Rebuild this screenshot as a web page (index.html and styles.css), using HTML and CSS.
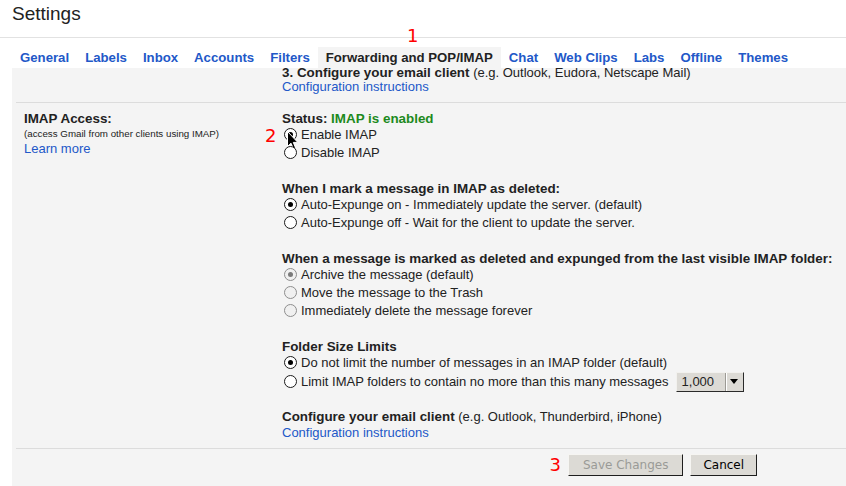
FILE: index.html
```html
<!DOCTYPE html>
<html lang="en">
<head>
<meta charset="utf-8">
<title>Settings</title>
<link rel="stylesheet" href="styles.css">
</head>
<body>
<header class="header"><h1 class="title">Settings</h1></header>
<nav class="tabs">
  <a class="tab">General</a>
  <a class="tab">Labels</a>
  <a class="tab">Inbox</a>
  <a class="tab">Accounts</a>
  <a class="tab">Filters</a>
  <span class="tab tab--active">Forwarding and POP/IMAP</span>
  <a class="tab">Chat</a>
  <a class="tab">Web Clips</a>
  <a class="tab">Labs</a>
  <a class="tab">Offline</a>
  <a class="tab">Themes</a>
</nav>
<main class="panel">
  <section class="row row--clipped">
    <div class="row__label"></div>
    <div class="row__body">
      <div class="line"><b class="strong">3. Configure your email client</b> (e.g. Outlook, Eudora, Netscape Mail)</div>
      <a class="link line">Configuration instructions</a>
    </div>
  </section>
  <section class="row">
    <div class="row__label">
      <div class="label-title">IMAP Access:</div>
      <div class="label-note">(access Gmail from other clients using IMAP)</div>
      <a class="link label-link">Learn more</a>
    </div>
    <div class="row__body">
      <div class="group">
        <div class="heading">Status: <span class="status-on">IMAP is enabled</span></div>
        <div class="opt">
          <span class="radio radio--on"></span>Enable IMAP
          <span class="marker marker--2">2</span>
          <svg class="cursor" width="12" height="19" viewBox="0 0 12 19"><path d="M0.5 0.5 L0.5 15.5 L4 12.2 L6.4 17.8 L8.6 16.9 L6.3 11.4 L10.8 11.4 Z" fill="#000" stroke="#fff" stroke-width="1" stroke-linejoin="round"/></svg>
        </div>
        <div class="opt"><span class="radio"></span>Disable IMAP</div>
      </div>
      <div class="group">
        <div class="heading">When I mark a message in IMAP as deleted:</div>
        <div class="opt"><span class="radio radio--on"></span>Auto-Expunge on - Immediately update the server. (default)</div>
        <div class="opt"><span class="radio"></span>Auto-Expunge off - Wait for the client to update the server.</div>
      </div>
      <div class="group">
        <div class="heading">When a message is marked as deleted and expunged from the last visible IMAP folder:</div>
        <div class="opt"><span class="radio radio--disabled radio--on"></span>Archive the message (default)</div>
        <div class="opt"><span class="radio radio--disabled"></span>Move the message to the Trash</div>
        <div class="opt"><span class="radio radio--disabled"></span>Immediately delete the message forever</div>
      </div>
      <div class="group">
        <div class="heading">Folder Size Limits</div>
        <div class="opt"><span class="radio radio--on"></span>Do not limit the number of messages in an IMAP folder (default)</div>
        <div class="opt opt--select"><span class="radio"></span>Limit IMAP folders to contain no more than this many messages
          <span class="select"><span class="select__value">1,000</span><span class="select__arrow"><span class="triangle"></span></span></span>
        </div>
      </div>
      <div class="config">
        <div class="line"><b class="strong">Configure your email client</b> (e.g. Outlook, Thunderbird, iPhone)</div>
        <a class="link line line--link">Configuration instructions</a>
      </div>
    </div>
  </section>
  <section class="actions">
    <span class="marker marker--3">3</span>
    <button class="btn btn--disabled" disabled>Save Changes</button>
    <button class="btn">Cancel</button>
  </section>
</main>
<span class="marker marker--1">1</span>
</body>
</html>
```
FILE: styles.css
```css
html, body {
  margin: 0;
  padding: 0;
}
body {
  position: relative;
  width: 846px;
  height: 486px;
  overflow: hidden;
  background: #fff;
  color: #222;
  font-family: "Liberation Sans", Arial, sans-serif;
  font-size: 13px;
}

.header {
  height: 34px;
  padding: 3px 12px 0;
  border-bottom: 1px solid #e2e2e2;
}
.title {
  margin: 0;
  font-size: 19px;
  line-height: 22px;
  font-weight: normal;
  color: #222;
}

.tabs {
  display: flex;
  margin: 9px 0 0 12px;
}
.tab {
  padding: 0 8px;
  line-height: 21px;
  font-size: 13.2px;
  font-weight: bold;
  color: #2258c8;
  white-space: nowrap;
}
.tab--active {
  background: #f4f4f4;
  color: #222;
}

.panel {
  margin-left: 12px;
  height: 418px;
  overflow: hidden;
  background: #f4f4f4;
}

.row {
  display: grid;
  grid-template-columns: 258px 1fr;
  margin-left: 4px;
  padding: 8.5px 0 7.5px 8px;
  border-top: 1px solid #dcdcdc;
}
.row--clipped {
  border-top: none;
  margin-top: -10.5px;
  padding-bottom: 8px;
}

.line {
  display: block;
  line-height: 14px;
  white-space: nowrap;
}
.line--link {
  line-height: 17px;
}
.strong {
  font-size: 13.4px;
  font-weight: bold;
}
.link {
  color: #2258c8;
  text-decoration: none;
}

.label-title {
  font-size: 13.4px;
  font-weight: bold;
  line-height: 14px;
}
.label-note {
  margin-top: 1px;
  font-size: 9.75px;
  line-height: 14px;
  color: #222;
}
.label-link {
  display: block;
  line-height: 15px;
}

.group + .group {
  margin-top: 20px;
}
.config {
  margin-top: 18px;
}
.heading {
  font-size: 13.4px;
  font-weight: bold;
  line-height: 14px;
  white-space: nowrap;
}
.status-on {
  color: #1d8a1d;
}

.opt {
  position: relative;
  display: flex;
  align-items: center;
  height: 18px;
  padding-left: 2px;
  white-space: nowrap;
}
.opt--select {
  height: 20px;
}

.radio {
  flex: none;
  display: flex;
  align-items: center;
  justify-content: center;
  box-sizing: border-box;
  width: 13px;
  height: 13px;
  margin-right: 4px;
  border: 1px solid #1a1a1a;
  border-radius: 50%;
  background: #fff;
}
.radio--on::after {
  content: "";
  width: 5px;
  height: 5px;
  border-radius: 50%;
  background: #000;
}
.radio--disabled {
  border-color: #8e8e8e;
  background: #f0f0f0;
}
.radio--disabled.radio--on::after {
  background: #7a7a7a;
}

.select {
  display: inline-flex;
  box-sizing: border-box;
  height: 20px;
  width: 68px;
  margin-left: 7px;
  background: #dcdad5;
  border: 1px solid;
  border-color: #f2f1ee #2a2a2a #2a2a2a #f2f1ee;
}
.select__value {
  flex: 1;
  padding-left: 5px;
  line-height: 18px;
}
.select__arrow {
  display: flex;
  align-items: center;
  justify-content: center;
  width: 17px;
  border-left: 1px solid #9c9a94;
  box-shadow: inset 1px 0 #fff;
}
.triangle {
  width: 0;
  height: 0;
  border-left: 4px solid transparent;
  border-right: 4px solid transparent;
  border-top: 5px solid #000;
}

.actions {
  display: flex;
  align-items: center;
  margin-left: 4px;
  padding: 5px 0 0 533.5px;
  border-top: 1px solid #dcdcdc;
}
.btn {
  box-sizing: border-box;
  height: 22px;
  padding: 0 12px;
  margin: 0 7px 0 0;
  font-family: "DejaVu Sans", sans-serif;
  font-size: 12px;
  color: #000;
  background: #dcdad5;
  border: 1px solid;
  border-color: #f6f5f2 #1e1e1e #1e1e1e #f6f5f2;
  border-radius: 0;
}
.btn--disabled {
  padding: 0 14px;
  color: #9a9a97;
}

.marker {
  font-family: "DejaVu Sans", sans-serif;
  font-size: 18px;
  line-height: 18px;
  color: #f00;
}
.marker--1 {
  position: absolute;
  left: 407px;
  top: 27.3px;
}
.marker--2 {
  position: absolute;
  left: -17px;
  top: 1.3px;
}
.marker--3 {
  margin-right: 7px;
}

.cursor {
  position: absolute;
  left: 4.5px;
  top: 5px;
}
```
